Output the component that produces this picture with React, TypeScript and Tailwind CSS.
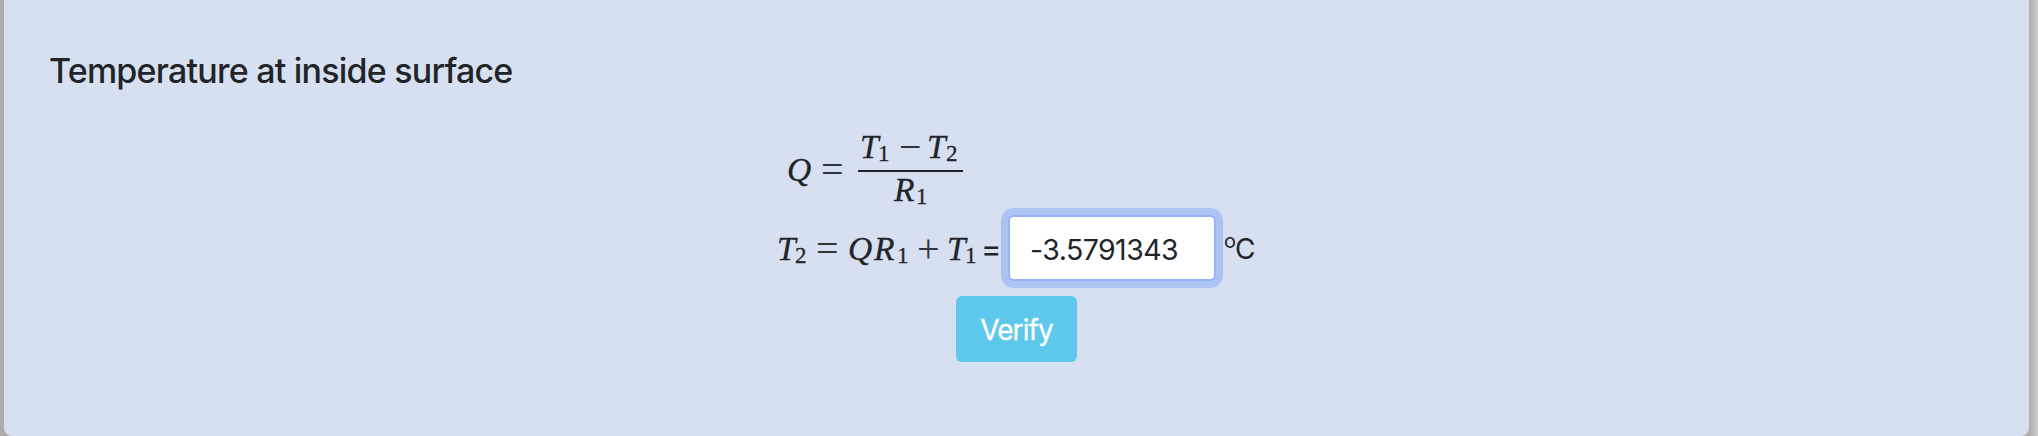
import { useState } from "react";
import type { ReactNode } from "react";

function Glyph({ className, children }: { className: string; children: ReactNode }) {
  return (
    <span
      className={`block h-10 shrink-0 whitespace-nowrap text-[33.5px] leading-10 [-webkit-text-stroke:0.3px_#212529] ${className}`}
    >
      {children}
    </span>
  );
}

function Sub({ className, children }: { className: string; children: ReactNode }) {
  return (
    <span className={`block h-10 shrink-0 whitespace-nowrap pt-[7px] text-[23px] leading-10 ${className}`}>
      <span className="-ml-[2px] [-webkit-text-stroke:0.3px_#212529]">{children}</span>
    </span>
  );
}

function Op({ className, children }: { className: string; children: ReactNode }) {
  return (
    <span className={`block h-10 shrink-0 whitespace-nowrap text-[40px] leading-10 text-[#32373c] ${className}`}>
      {children}
    </span>
  );
}

const mathFont = "font-['Liberation_Serif',serif]";

export default function App() {
  const [value, setValue] = useState("-3.5791343");
  return (
    <div className="flex h-[436px] w-[2038px] overflow-hidden bg-[linear-gradient(to_right,#acacac_0,#acacac_2029px,#cecece_2038px)] pl-1 font-['Inter',sans-serif] text-[#212529]">
      <main className="flex h-[436px] w-[2025px] flex-col rounded-b-[8px] bg-[#d7e0f0]">
        <h2 className="ml-[45px] mt-[50px] h-[42px] whitespace-nowrap text-[34px] font-medium leading-[42px] tracking-[-0.78px]">
          Temperature at inside surface
        </h2>
        <div className={`ml-[783px] mt-[35px] flex h-[85px] ${mathFont}`}>
          <div className="flex pt-[23px]">
            <Glyph className="w-[34px] italic">Q</Glyph>
            <Op className="w-[37px]">=</Op>
          </div>
          <div className="flex w-[105px] flex-col">
            <div className="flex h-[45px] border-b-2 border-[#212529] pl-[2px]">
              <Glyph className="w-[20px] italic">T</Glyph>
              <Sub className="w-[19px]">1</Sub>
              <Op className="w-[28px]">−</Op>
              <Glyph className="w-[21px] italic">T</Glyph>
              <Sub className="w-[14px]">2</Sub>
            </div>
            <div className="-mt-[2px] flex pl-[36px]">
              <Glyph className="w-[24px] italic">R</Glyph>
              <Sub className="w-[14px]">1</Sub>
            </div>
          </div>
        </div>
        <div className="ml-[773px] flex h-[72px] items-center">
          <div className={`flex pt-px ${mathFont}`}>
            <Glyph className="w-[20px] italic">T</Glyph>
            <Sub className="w-[19px]">2</Sub>
            <Op className="w-[32px]">=</Op>
            <Glyph className="w-[26px] italic">Q</Glyph>
            <Glyph className="w-[25px] italic">R</Glyph>
            <Sub className="w-[18px]">1</Sub>
            <Op className="w-[30px]">+</Op>
            <Glyph className="w-[20px] italic">T</Glyph>
            <Sub className="w-[14px]">1</Sub>
          </div>
          <span className="w-[27px] pt-[2px] text-[31px] leading-10">=</span>
          <input
            className="h-[66px] w-[208px] rounded-[6px] border-2 border-[#93b5f8] bg-white px-[20px] pt-[3px] text-[28.5px] tracking-[-0.55px] shadow-[0_0_0_7px_#adc3f2] outline-none"
            value={value}
            onChange={(event) => setValue(event.target.value)}
            aria-label="Temperature"
          />
          <span className="ml-[8px] flex pt-[2px] text-[28px] leading-10">
            <span className="-mt-[8px] text-[20px]">o</span>
            <span className="-ml-px tracking-[-1px]">C</span>
          </span>
        </div>
        <button className="ml-[952px] mt-[12px] h-[66px] w-[121px] rounded-[6px] bg-[#5ec8ec] pt-[2px] text-[28px] tracking-[-0.9px] text-white [-webkit-text-stroke:0.3px_white]">
          Verify
        </button>
      </main>
    </div>
  );
}
